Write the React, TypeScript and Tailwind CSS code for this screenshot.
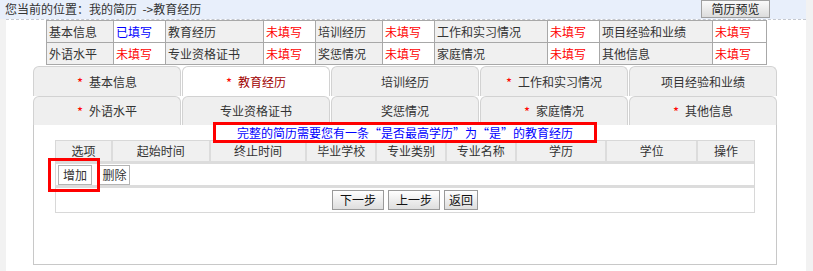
import React from "react";

const FONT = { fontFamily: '"Noto Sans CJK SC", "Liberation Sans", sans-serif' };

const info: [string, boolean][][] = [
  [
    ["基本信息", true],
    ["教育经历", false],
    ["培训经历", false],
    ["工作和实习情况", false],
    ["项目经验和业绩", false],
  ],
  [
    ["外语水平", false],
    ["专业资格证书", false],
    ["奖惩情况", false],
    ["家庭情况", false],
    ["其他信息", false],
  ],
];

const infoWidths = [67, 52, 98, 52, 67, 52, 113, 52, 113, 54];

const tabs: { label: string; star: boolean; active?: boolean }[][] = [
  [
    { label: "基本信息", star: true },
    { label: "教育经历", star: true, active: true },
    { label: "培训经历", star: false },
    { label: "工作和实习情况", star: true },
    { label: "项目经验和业绩", star: false },
  ],
  [
    { label: "外语水平", star: true },
    { label: "专业资格证书", star: false },
    { label: "奖惩情况", star: false },
    { label: "家庭情况", star: true },
    { label: "其他信息", star: true },
  ],
];

const cols = [
  ["选项", 57],
  ["起始时间", 98],
  ["终止时间", 97],
  ["毕业学校", 70],
  ["专业类别", 70],
  ["专业名称", 70],
  ["学历", 91],
  ["学位", 91],
  ["操作", 56],
] as const;

export default function App() {
  return (
    <div
      className="flex h-[271px] w-[813px] bg-[#f2f2f2] text-[12px] leading-none text-[#333]"
      style={FONT}
    >
      <div className="flex w-[806px] flex-col">
        {/* location bar */}
        <div className="flex h-[19px] items-start justify-between bg-[#e8effb] pl-[5px] pr-[36px]">
          <span className="mt-[3px] whitespace-pre">您当前的位置：我的简历  -&gt;教育经历</span>
          <button className="h-[18px] w-[69px] border border-[#a0a0a0] bg-gradient-to-b from-[#fafafa] to-[#dcdcdc] text-[12px] leading-none text-[#222]">
            简历预览
          </button>
        </div>

        <div className="ml-[6px] flex flex-1 flex-col border-t border-dashed border-[#c4c8d0] bg-white">
          {/* status table */}
          <table className="ml-[40px] w-[720px] table-fixed border-collapse">
            <colgroup>
              {infoWidths.map((w, i) => (
                <col key={i} style={{ width: w }} />
              ))}
            </colgroup>
            <tbody>
              {info.map((row, r) => (
                <tr key={r} className="h-[22px]">
                  {row.flatMap(([label, done]) => [
                    <td
                      key={label}
                      className="border border-[#a8a8a8] bg-[#f0f0f0] px-[2px] align-middle whitespace-nowrap"
                    >
                      {label}
                    </td>,
                    <td
                      key={label + "v"}
                      className={`border border-[#a8a8a8] bg-white px-[2px] align-middle whitespace-nowrap ${
                        done ? "text-[#0000ff]" : "text-[#ff0000]"
                      }`}
                    >
                      {done ? "已填写" : "未填写"}
                    </td>,
                  ])}
                </tr>
              ))}
            </tbody>
          </table>

          {/* tabs */}
          <div className="ml-[27px] mt-px w-[744px]">
            {tabs.map((row, r) => (
              <div
                key={r}
                className={`grid grid-cols-5 gap-x-px ${r === 0 ? "h-[30px]" : "h-[29px]"}`}
              >
                {row.map((t) => (
                  <div
                    key={t.label}
                    className={`flex items-center justify-center gap-[6px] rounded-t-[6px] border border-b-0 border-[#d2d2d2] border-b-[#c8c8c8] ${
                      t.active ? "bg-white text-[#a00000]" : "bg-[#efefef] text-[#333]"
                    } ${r === 1 ? "border-b" : ""}`}
                  >
                    {t.star && <span className="mt-[1px] text-[13px] text-[#ff0000]">*</span>}
                    <span>{t.label}</span>
                  </div>
                ))}
              </div>
            ))}

            {/* content panel */}
            <div className="relative flex h-[140px] flex-col items-center border border-t-0 border-[#c8c8c8]">
              <div className="relative z-10 -mt-[3px] flex h-[21px] w-[384px] items-center justify-center border-[3px] border-[#ff0000] bg-transparent text-[#0000ff]">
                完整的简历需要您有一条“是否最高学历”为“是”的教育经历
              </div>

              <div className="-mt-[3px] w-[700px] border border-[#d8d8d8]">
                <div className="flex h-[23px] border-b-[3px] border-[#dcdcdc] bg-[#f0f0f0]">
                  {cols.map(([c, w], i) => (
                    <div
                      key={c}
                      className={`flex items-center justify-center ${
                        i < cols.length - 1 ? "border-r-2 border-[#dcdcdc]" : ""
                      }`}
                      style={{ width: w }}
                    >
                      {c}
                    </div>
                  ))}
                </div>
                <div className="relative flex h-[24px] items-center border-b-[3px] border-[#dcdcdc] pl-[2px]">
                  <button className="relative z-10 h-[20px] w-[34px] border border-[#b4b4b4] bg-white text-[12px] leading-none">
                    增加
                  </button>
                  <button className="ml-[7px] h-[20px] w-[31px] border border-[#b4b4b4] bg-white text-[12px] leading-none">
                    删除
                  </button>
                  <div className="pointer-events-none absolute -top-[6px] left-[-8px] h-[34px] w-[52px] border-[3px] border-[#ff0000]" />
                </div>
                <div className="flex h-[24px] items-center justify-center gap-[4px]">
                  {["下一步", "上一步", "返回"].map((b) => (
                    <button
                      key={b}
                      className={`h-[20px] border border-[#9a9a9a] bg-gradient-to-b from-white to-[#dedede] text-[12px] leading-none text-[#111] ${
                        b === "返回" ? "w-[34px]" : "w-[52px]"
                      }`}
                    >
                      {b}
                    </button>
                  ))}
                </div>
              </div>
            </div>
          </div>
        </div>
      </div>
    </div>
  );
}
